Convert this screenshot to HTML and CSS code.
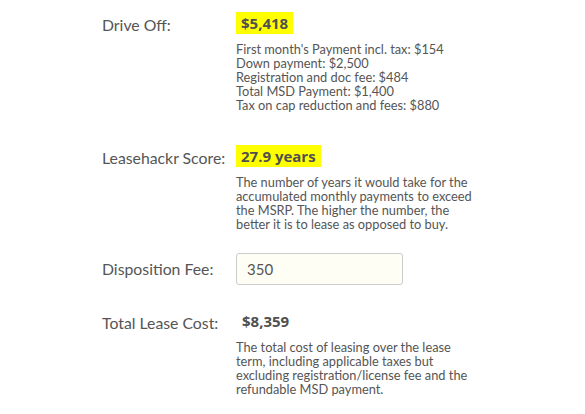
FILE: index.html
```html
<!DOCTYPE html>
<html>
<head>
<meta charset="utf-8">
<link rel="stylesheet" href="styles.css">
</head>
<body>
<div class="page">
  <div class="row r1">
    <div class="label">Drive Off:</div>
    <div class="val">
      <span class="hl">$5,418</span>
      <div class="desc">First month's Payment incl. tax: $154<br>Down payment: $2,500<br>Registration and doc fee: $484<br>Total MSD Payment: $1,400<br>Tax on cap reduction and fees: $880</div>
    </div>
  </div>
  <div class="row r2">
    <div class="label">Leasehackr Score:</div>
    <div class="val">
      <span class="hl">27.9 years</span>
      <div class="desc">The number of years it would take for the<br>accumulated monthly payments to exceed<br>the MSRP. The higher the number, the<br>better it is to lease as opposed to buy.</div>
    </div>
  </div>
  <div class="row r3">
    <div class="label">Disposition Fee:</div>
    <div class="val">
      <div class="input">350</div>
    </div>
  </div>
  <div class="row r4">
    <div class="label">Total Lease Cost:</div>
    <div class="val">
      <span class="plain">$8,359</span>
      <div class="desc">The total cost of leasing over the lease<br>term, including applicable taxes but<br>excluding registration/license fee and the<br>refundable MSD payment.</div>
    </div>
  </div>
</div>
</body>
</html>
```
FILE: styles.css
```css
html, body { margin: 0; padding: 0; background: #fff; }
body { font-family: Lato, "Liberation Sans", sans-serif; color: #555; }
.page { padding: 12px 0 0 102px; width: 440px; }
.row { display: grid; grid-template-columns: 134px 1fr; }
.label { font-size: 15.8px; line-height: 22px; padding-top: 2px; color: #555; }
.hl { display: inline-block; background: #ffff00; font-family: "Open Sans", sans-serif; font-weight: 700; font-size: 15px; line-height: 22px; padding: 0 5px; color: #505050; }
.plain { display: inline-block; font-family: "Open Sans", sans-serif; font-weight: 700; font-size: 15px; line-height: 22px; padding: 0 6px; color: #505050; }
.desc { font-size: 12.8px; line-height: 14px; margin-top: 8px; color: #555; }
.r2 { margin-top: 33px; }
.r3 { margin-top: 22px; }
.r3 .label { padding-top: 5px; }
.input { width: 155px; height: 30px; border: 1px solid #ccc; border-radius: 3px; background: #fffef5; font-size: 15px; line-height: 30px; padding-left: 10px; box-sizing: content-box; }
.r4 { margin-top: 25px; }
```
